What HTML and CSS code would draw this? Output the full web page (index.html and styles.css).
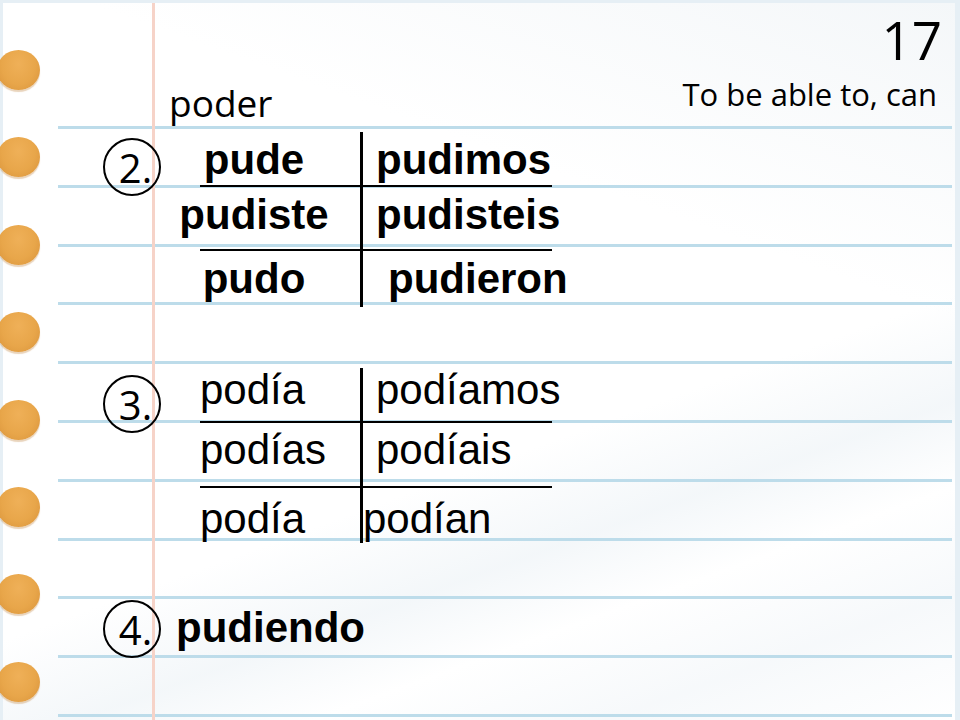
FILE: index.html
```html
<!DOCTYPE html>
<html lang="es">
<head>
<meta charset="utf-8">
<title>poder</title>
<link rel="stylesheet" href="styles.css">
</head>
<body>
<div class="page">
  <div class="holes">
    <span class="hole"></span>
    <span class="hole"></span>
    <span class="hole"></span>
    <span class="hole"></span>
    <span class="hole"></span>
    <span class="hole"></span>
    <span class="hole"></span>
    <span class="hole"></span>
  </div>
  <main class="sheet">
    <header class="head">
      <div class="verb">poder</div>
      <div class="title">
        <div class="num">17</div>
        <div class="meaning">To be able to, can</div>
      </div>
    </header>

    <section class="sec sec-pret">
      <div class="badge">2.</div>
      <div class="conj conj-pret">
        <div class="row"><div class="cell l">pude</div><div class="cell r">pudimos</div></div>
        <div class="row"><div class="cell l">pudiste</div><div class="cell r">pudisteis</div></div>
        <div class="row"><div class="cell l">pudo</div><div class="cell r r-space">pudieron</div></div>
      </div>
    </section>

    <section class="sec sec-imp">
      <div class="badge">3.</div>
      <div class="conj conj-imp">
        <div class="row"><div class="cell l">podía</div><div class="cell r">podíamos</div></div>
        <div class="row"><div class="cell l">podías</div><div class="cell r">podíais</div></div>
        <div class="row"><div class="cell l">podía</div><div class="cell r r-tight">podían</div></div>
      </div>
    </section>

    <section class="sec sec-ger">
      <div class="badge">4.</div>
      <div class="gerund">pudiendo</div>
    </section>
  </main>
</div>
</body>
</html>
```

FILE: styles.css
```css
* {
  box-sizing: border-box;
  margin: 0;
  padding: 0;
}

html,
body {
  width: 960px;
  height: 720px;
  overflow: hidden;
}

body {
  background: #ffffff;
  color: #000;
}

.page {
  width: 960px;
  height: 720px;
  display: grid;
  grid-template-columns: 44px 1fr;
  box-shadow: inset 3px 3px 0 #e6eff5, inset -5px 0 0 #e6eff5;
  background:
    linear-gradient(to right, transparent 152px, #f6d3c8 152px, #f6d3c8 155px, transparent 155px),
    repeating-linear-gradient(to bottom, #bddcea 0, #bddcea 3px, transparent 3px, transparent 58.8px) 58px 126px / 894px 594px no-repeat,
    linear-gradient(160deg, rgba(255,255,255,0) 60%, rgba(236,242,246,0.6) 70%, rgba(255,255,255,0) 78%, rgba(238,243,247,0.5) 88%, rgba(255,255,255,0) 100%),
    linear-gradient(200deg, #f4f7f9 0%, #ffffff 30%, #ffffff 100%);
}

/* binder holes */
.holes {
  display: flex;
  flex-direction: column;
  gap: 47.4px;
  padding-top: 50px;
  margin-left: -3px;
}

.hole {
  display: block;
  width: 43px;
  height: 40px;
  border-radius: 50%;
  background: radial-gradient(ellipse at 50% 35%, #efb058 0%, #e8a64a 55%, #d8923a 100%);
  box-shadow: 0 2px 1px rgba(190, 130, 60, 0.35);
}

/* main sheet */
.sheet {
  display: flex;
  flex-direction: column;
}

.head {
  display: flex;
  justify-content: space-between;
  align-items: flex-start;
  height: 121px;
  padding-right: 18px;
}

.verb {
  font-family: "Open Sans", sans-serif;
  font-size: 37px;
  line-height: 37px;
  margin-top: 84px;
  margin-left: 125px;
}

.title {
  display: flex;
  flex-direction: column;
  align-items: flex-end;
  font-family: "Open Sans", sans-serif;
}

.num {
  font-size: 53px;
  line-height: 53px;
  margin-top: 13px;
}

.meaning {
  font-size: 31px;
  line-height: 31px;
  margin-top: 13px;
  margin-right: 5px;
}

/* sections */
.sec {
  display: flex;
  align-items: flex-start;
  padding-left: 59px;
}

.sec-pret {
  margin-top: 11px;
}

.sec-imp {
  margin-top: 61px;
}

.sec-ger {
  margin-top: 57px;
}

.badge {
  width: 58px;
  height: 58px;
  flex: none;
  border: 2.5px solid #000;
  border-radius: 50%;
  display: flex;
  align-items: center;
  justify-content: center;
  padding-left: 7px;
  padding-top: 2px;
  font-family: "Open Sans", sans-serif;
  font-size: 40px;
  line-height: 1;
}

.sec-pret .badge {
  margin-top: 6px;
}

.sec-imp .badge {
  margin-top: 7px;
}

/* conjugation grids */
.conj {
  margin-left: 39px;
  display: flex;
  flex-direction: column;
  font-family: "Liberation Sans", Arial, sans-serif;
  font-size: 42px;
  line-height: 42px;
}

.conj-pret {
  font-weight: bold;
}

.row {
  display: grid;
  grid-template-columns: 160px 192px;
}

.row:nth-child(1),
.row:nth-child(2) {
  border-bottom: 2px solid #000;
}

.cell {
  display: flex;
  align-items: flex-end;
  white-space: nowrap;
}

.cell.r {
  border-left: 3px solid #000;
  padding-left: 13px;
}

.conj-pret .cell.l {
  justify-content: center;
  padding-right: 52px;
}

.cell.r-space {
  padding-left: 25px;
}

.cell.r-tight {
  padding-left: 0;
}

/* preterite rows: heights 55 / 64 / 56 */
.conj-pret .row:nth-child(1) { height: 55px; }
.conj-pret .row:nth-child(2) { height: 64px; }
.conj-pret .row:nth-child(3) { height: 56px; }
.conj-pret .row:nth-child(1) .cell { padding-bottom: 4px; }
.conj-pret .row:nth-child(2) .cell { padding-bottom: 13px; }
.conj-pret .row:nth-child(3) .cell { padding-bottom: 7px; }

/* imperfect rows: heights 55 / 65 / 55 */
.conj-imp .row:nth-child(1) { height: 55px; }
.conj-imp .row:nth-child(2) { height: 65px; }
.conj-imp .row:nth-child(3) { height: 55px; }
.conj-imp .row:nth-child(1) .cell { padding-bottom: 10px; }
.conj-imp .row:nth-child(2) .cell { padding-bottom: 15px; }
.conj-imp .row:nth-child(3) .cell { padding-bottom: 3px; }

.gerund {
  margin-left: 15px;
  margin-top: 7px;
  font-family: "Liberation Sans", Arial, sans-serif;
  font-weight: bold;
  font-size: 42px;
  line-height: 42px;
}
```
